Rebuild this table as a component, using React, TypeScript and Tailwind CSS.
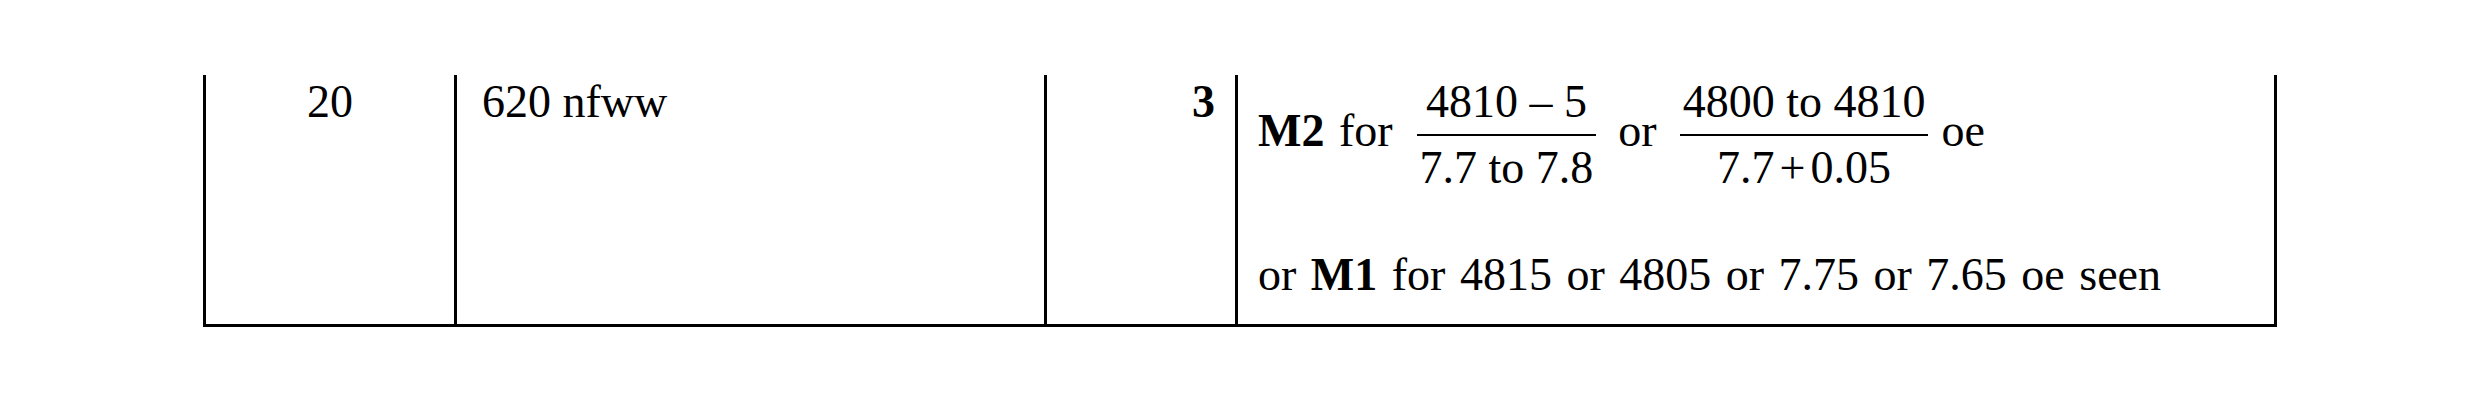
import React from "react";

function Frac({ num, den, className = "" }: { num: React.ReactNode; den: React.ReactNode; className?: string }) {
  return (
    <div className={"flex flex-col items-center [word-spacing:0px] " + className}>
      <div className="h-[46px] px-[3px] whitespace-pre">{num}</div>
      <div className="mt-[9px] mb-[9px] h-[2px] w-full bg-black" />
      <div className="h-[46px] px-[3px] whitespace-pre">{den}</div>
    </div>
  );
}

export default function App() {
  return (
    <div className="min-h-[402px] w-[2480px] bg-white pt-[75px] font-['Liberation_Serif',serif] text-[46px] leading-[46px] text-black">
      <div className="ml-[203px] grid w-[2074px] grid-cols-[251px_590px_191px_1042px] border-b-[3px] border-black">
        <div className="h-[249px] border-l-[3px] border-black pt-[4px] text-center">20</div>
        <div className="h-[249px] border-l-[3px] border-black pl-[25px] pt-[4px]">620 nfww</div>
        <div className="h-[249px] border-l-[3px] border-black pr-[20px] pt-[4px] text-right font-bold">3</div>
        <div className="h-[249px] border-l-[3px] border-r-[3px] border-black pl-[20px] pt-[4px] [word-spacing:3px]">
          <div className="flex items-start whitespace-nowrap">
            <span className="mt-[29px] whitespace-pre">
              <span className="font-bold">M2</span> for
            </span>
            <Frac className="ml-[24px]" num="4810 – 5" den="7.7 to 7.8" />
            <span className="ml-[22px] mt-[29px]">or</span>
            <Frac
              className="ml-[23px]"
              num="4800 to 4810"
              den={
                <span className="flex items-start">
                  <span>7.7</span>
                  <span className="mx-[5px]">+</span>
                  <span>0.05</span>
                </span>
              }
            />
            <span className="ml-[13px] mt-[29px]">oe</span>
          </div>
          <div className="mt-[61px] whitespace-pre">
            or <span className="font-bold">M1</span> for 4815 or 4805 or 7.75 or 7.65 oe seen
          </div>
        </div>
      </div>
    </div>
  );
}
